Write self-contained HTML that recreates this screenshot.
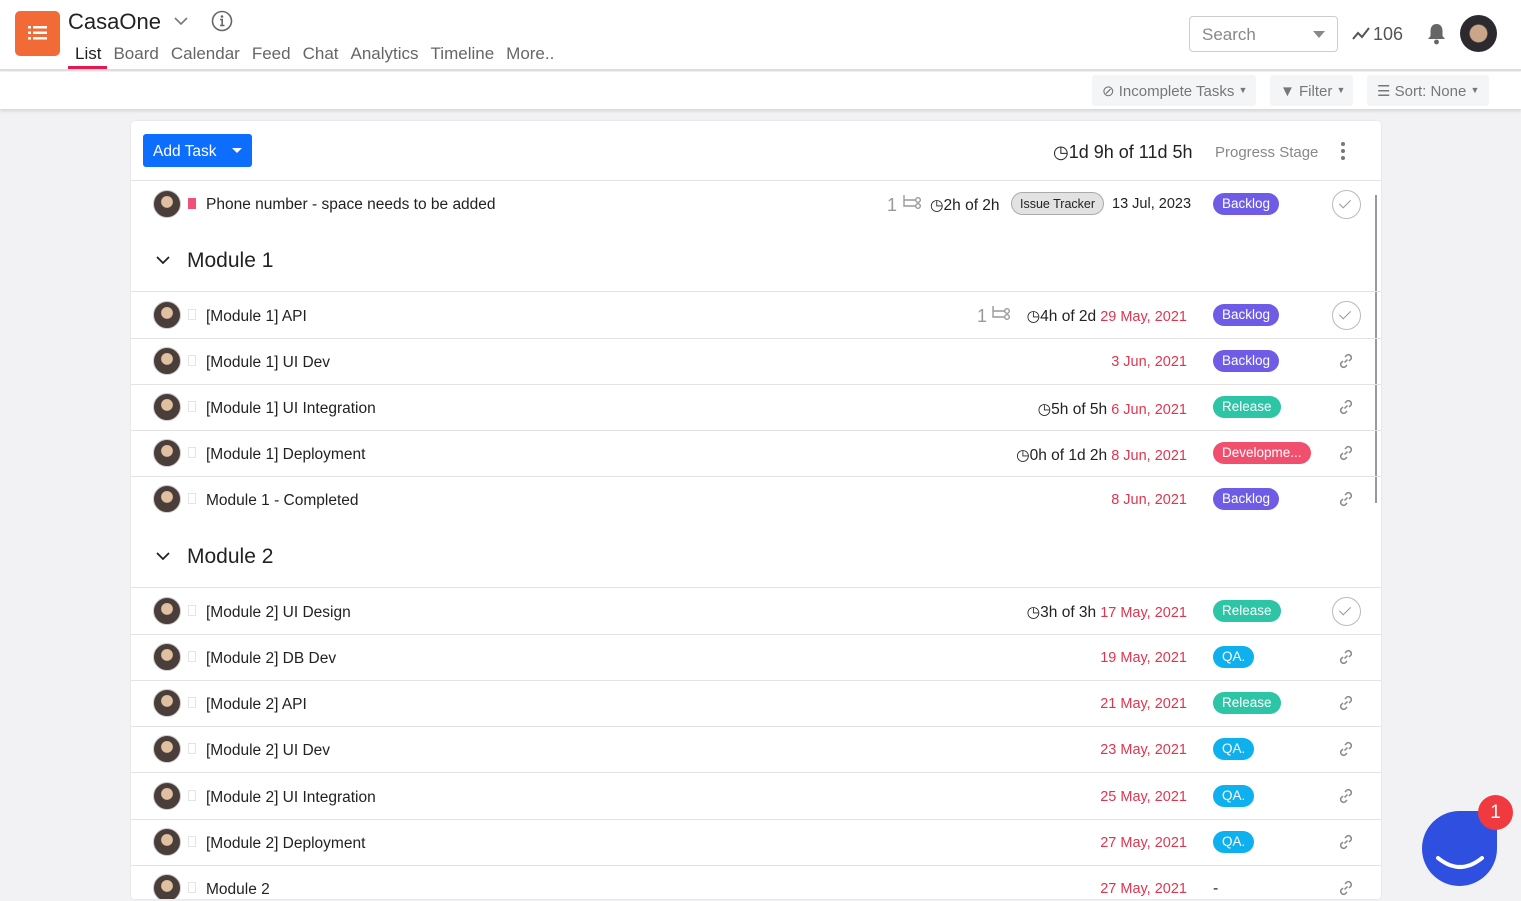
<!DOCTYPE html><html><head><meta charset="utf-8"><style>
*{box-sizing:border-box;margin:0;padding:0}
body{width:1521px;height:901px;overflow:hidden;background:#f2f2f4;font-family:"Liberation Sans",sans-serif;color:#222;position:relative}
.top{position:absolute;left:0;top:0;width:1521px;height:71px;background:#fff;border-bottom:2px solid #ddd}
.bar2{position:absolute;left:0;top:72px;width:1521px;height:37px;background:#fff;box-shadow:0 2px 3px rgba(0,0,0,.12)}
.a{position:absolute}
.nav span{margin-right:12px;color:#666;font-size:17px}
.btn2{position:absolute;top:75px;height:31px;background:#f4f5f7;border-radius:3px;color:#777;font-size:15px;line-height:31px;padding:0 10px;white-space:nowrap}
.btn2 i{font-style:normal;font-size:9px;vertical-align:3px}
.card{position:absolute;left:131px;top:121px;width:1250px;height:778px;background:#fff;border-radius:4px;box-shadow:0 0 2px rgba(0,0,0,.1);overflow:hidden}
.row{position:absolute;left:0;width:1250px;border-top:1px solid #e3e3e3}
.av{position:absolute;left:22px;width:28px;height:28px;border-radius:50%;background:radial-gradient(circle at 50% 42%,#e0c0a0 0 28%,#4a3e3a 31%);border:1px solid #ccc}
.sq{position:absolute;left:57px;width:8px;height:11px;border:1px solid #e4e4e4}
.tt{position:absolute;left:75px;font-size:15.5px;color:#222}
.dt{position:absolute;right:194px;font-size:14.5px;color:#e0354f;text-align:right;white-space:nowrap}
.dt .k{color:#222;font-size:15.5px}
.bd{position:absolute;left:1082px;height:22px;border-radius:11px;color:#fff;font-size:13.5px;line-height:22px;padding:0 9px}
.bl{background:#6e5ce6}.rl{background:#2ec4a6}.dv{background:#f0506e}.qa{background:#0fb0ee}
.ck{position:absolute;left:1201px;width:29px;height:29px;border:1.5px solid #bbb;border-radius:50%}
.ck:after{content:"";position:absolute;left:9px;top:6px;width:5px;height:10px;border:solid #999;border-width:0 1.6px 1.6px 0;transform:rotate(45deg)}
.ln{position:absolute;left:1206px;width:18px;height:18px}
.mh{position:absolute;left:0;width:1250px;font-size:21px}
</style></head><body>
<div class="top"></div>
<div class="a" style="left:15px;top:11px;width:45px;height:45px;background:#f26b36;border-radius:5px"></div>
<svg class="a" style="left:28px;top:25px" width="20" height="16"><g fill="#fff"><rect x="0" y="1" width="3" height="2.5"/><rect x="5" y="1" width="14" height="2.5"/><rect x="0" y="6.5" width="3" height="2.5"/><rect x="5" y="6.5" width="14" height="2.5"/><rect x="0" y="12" width="3" height="2.5"/><rect x="5" y="12" width="14" height="2.5"/></g></svg>
<div class="a" style="left:68px;top:9px;font-size:22px;color:#222">CasaOne</div>
<svg class="a" style="left:174px;top:16px" width="14" height="10"><path d="M1 2l6 6 6-6" fill="none" stroke="#777" stroke-width="1.6"/></svg>
<svg class="a" style="left:211px;top:10px" width="22" height="22"><circle cx="11" cy="11" r="9.5" fill="none" stroke="#666" stroke-width="1.6"/><circle cx="11" cy="6.5" r="1.3" fill="#666"/><path d="M9 9.5h2.2v6M9 15.5h4.5" stroke="#666" stroke-width="1.6" fill="none"/></svg>
<div class="a nav" style="left:75px;top:44px;white-space:nowrap"><span style="color:#222">List</span><span>Board</span><span>Calendar</span><span>Feed</span><span>Chat</span><span>Analytics</span><span>Timeline</span><span>More..</span></div>
<div class="a" style="left:68px;top:66px;width:39px;height:3px;background:#e8174f"></div>
<div class="a" style="left:1189px;top:16px;width:149px;height:36px;border:1px solid #ccc;border-radius:4px;color:#888;font-size:17px;padding:8px 12px">Search</div>
<svg class="a" style="left:1313px;top:31px" width="12" height="7"><path d="M0 0h12L6 7z" fill="#888"/></svg>
<svg class="a" style="left:1352px;top:27px" width="18" height="14"><path d="M1 12l5-6 4 4 7-9" fill="none" stroke="#555" stroke-width="2"/></svg>
<div class="a" style="left:1373px;top:24px;font-size:18px;color:#555">106</div>
<svg class="a" style="left:1426px;top:23px" width="21" height="22"><path d="M10.5 1c-4 0-6 3-6 7v5l-2.5 3h17l-2.5-3V8c0-4-2-7-6-7z" fill="#666"/><circle cx="10.5" cy="19" r="2.4" fill="#666"/></svg>
<div class="a" style="left:1460px;top:15px;width:37px;height:37px;border-radius:50%;background:radial-gradient(circle at 50% 50%,#c9a58a 0 32%,#2c2a2e 36%)"></div>
<div class="bar2"></div>
<div class="btn2" style="left:1092px;width:164px">⊘ Incomplete Tasks <i>▼</i></div>
<div class="btn2" style="left:1270px;width:83px">▼ Filter <i>▼</i></div>
<div class="btn2" style="left:1367px;width:122px">☰ Sort: None <i>▼</i></div>

<div class="card">
<div class="a" style="left:12px;top:13px;width:109px;height:33px;background:#0d6efd;border-radius:3px;color:#fff;font-size:15.5px;line-height:35px;padding-left:10px">Add Task<svg style="position:absolute;left:89px;top:14px" width="10" height="6"><path d="M0 0h10L5 5z" fill="#fff"/></svg></div>
<div class="a" style="left:922px;top:21px;font-size:18px;color:#222">◷1d 9h of 11d 5h</div>
<div class="a" style="left:1084px;top:23px;font-size:15px;color:#888">Progress Stage</div>
<svg class="a" style="left:1209px;top:20px" width="6" height="20"><circle cx="3" cy="3" r="2" fill="#777"/><circle cx="3" cy="10" r="2" fill="#777"/><circle cx="3" cy="17" r="2" fill="#777"/></svg>
<div class="a" style="left:1244px;top:74px;width:2px;height:308px;background:#999"></div>

<div class="row" style="top:59px;height:52px">
<div class="av" style="top:9px"></div><div class="sq" style="top:17px;background:#f0507a;border-color:#f0507a"></div>
<div class="tt" style="top:15px">Phone number - space needs to be added</div>
<div class="a" style="left:756px;top:14px;font-size:18px;color:#999">1</div>
<svg class="a" style="left:771px;top:14px" width="20" height="18"><path d="M2 0v11h12M2 5h12" fill="none" stroke="#999" stroke-width="1.4"/><circle cx="16" cy="5" r="2.3" fill="none" stroke="#999" stroke-width="1.4"/><circle cx="16" cy="11" r="2.3" fill="none" stroke="#999" stroke-width="1.4"/></svg>
<div class="a" style="left:799px;top:15px;font-size:15.5px">◷2h of 2h</div>
<div class="a" style="left:880px;top:11px;height:23px;padding:0 8px;border:1px solid #aaa;background:#e2e2e2;border-radius:12px;font-size:12.5px;line-height:23px">Issue Tracker</div>
<div class="a" style="left:981px;top:15px;font-size:14.5px">13 Jul, 2023</div>
<div class="bd bl" style="top:12px">Backlog</div><div class="ck" style="top:9px"></div>
</div>
<div class="mh" style="top:128px"><svg class="a" style="left:25px;top:7px" width="14" height="9"><path d="M1 1l6 6 6-6" fill="none" stroke="#222" stroke-width="1.8"/></svg><span class="a" style="left:56px;top:0">Module 1</span></div>

<div class="row" style="top:170px;height:47px"><div class="av" style="top:9px"></div><div class="sq" style="top:17px"></div><div class="tt" style="top:16px">[Module 1] API</div>
<div class="a" style="left:846px;top:14px;font-size:18px;color:#999">1</div>
<svg class="a" style="left:860px;top:14px" width="20" height="18"><path d="M2 0v11h12M2 5h12" fill="none" stroke="#999" stroke-width="1.4"/><circle cx="16" cy="5" r="2.3" fill="none" stroke="#999" stroke-width="1.4"/><circle cx="16" cy="11" r="2.3" fill="none" stroke="#999" stroke-width="1.4"/></svg>
<div class="dt" style="top:15px"><span class="k">◷4h of 2d</span> 29 May, 2021</div><div class="bd bl" style="top:12px">Backlog</div><div class="ck" style="top:9px"></div></div>
<div class="row" style="top:217px;height:46px"><div class="av" style="top:8px"></div><div class="sq" style="top:16px"></div><div class="tt" style="top:15px">[Module 1] UI Dev</div><div class="dt" style="top:15px">3 Jun, 2021</div><div class="bd bl" style="top:11px">Backlog</div><svg class="ln" style="top:13px" viewBox="0 0 18 18"><path d="M7.5 10.5l3-3M8 5l2-2a3 3 0 014 4l-2 2M10 13l-2 2a3 3 0 01-4-4l2-2" fill="none" stroke="#888" stroke-width="1.5"/></svg></div>
<div class="row" style="top:263px;height:46px"><div class="av" style="top:8px"></div><div class="sq" style="top:16px"></div><div class="tt" style="top:15px">[Module 1] UI Integration</div><div class="dt" style="top:15px"><span class="k">◷5h of 5h</span> 6 Jun, 2021</div><div class="bd rl" style="top:11px">Release</div><svg class="ln" style="top:13px" viewBox="0 0 18 18"><path d="M7.5 10.5l3-3M8 5l2-2a3 3 0 014 4l-2 2M10 13l-2 2a3 3 0 01-4-4l2-2" fill="none" stroke="#888" stroke-width="1.5"/></svg></div>
<div class="row" style="top:309px;height:46px"><div class="av" style="top:8px"></div><div class="sq" style="top:16px"></div><div class="tt" style="top:15px">[Module 1] Deployment</div><div class="dt" style="top:15px"><span class="k">◷0h of 1d 2h</span> 8 Jun, 2021</div><div class="bd dv" style="top:11px">Developme...</div><svg class="ln" style="top:13px" viewBox="0 0 18 18"><path d="M7.5 10.5l3-3M8 5l2-2a3 3 0 014 4l-2 2M10 13l-2 2a3 3 0 01-4-4l2-2" fill="none" stroke="#888" stroke-width="1.5"/></svg></div>
<div class="row" style="top:355px;height:46px"><div class="av" style="top:8px"></div><div class="sq" style="top:16px"></div><div class="tt" style="top:15px">Module 1 - Completed</div><div class="dt" style="top:15px">8 Jun, 2021</div><div class="bd bl" style="top:11px">Backlog</div><svg class="ln" style="top:13px" viewBox="0 0 18 18"><path d="M7.5 10.5l3-3M8 5l2-2a3 3 0 014 4l-2 2M10 13l-2 2a3 3 0 01-4-4l2-2" fill="none" stroke="#888" stroke-width="1.5"/></svg></div>
<div class="mh" style="top:424px"><svg class="a" style="left:25px;top:7px" width="14" height="9"><path d="M1 1l6 6 6-6" fill="none" stroke="#222" stroke-width="1.8"/></svg><span class="a" style="left:56px;top:0">Module 2</span></div>

<div class="row" style="top:466px;height:47px"><div class="av" style="top:9px"></div><div class="sq" style="top:17px"></div><div class="tt" style="top:16px">[Module 2] UI Design</div><div class="dt" style="top:15px"><span class="k">◷3h of 3h</span> 17 May, 2021</div><div class="bd rl" style="top:12px">Release</div><div class="ck" style="top:9px"></div></div>
<div class="row" style="top:513px;height:46px"><div class="av" style="top:8px"></div><div class="sq" style="top:16px"></div><div class="tt" style="top:15px">[Module 2] DB Dev</div><div class="dt" style="top:15px">19 May, 2021</div><div class="bd qa" style="top:11px">QA.</div><svg class="ln" style="top:13px" viewBox="0 0 18 18"><path d="M7.5 10.5l3-3M8 5l2-2a3 3 0 014 4l-2 2M10 13l-2 2a3 3 0 01-4-4l2-2" fill="none" stroke="#888" stroke-width="1.5"/></svg></div>
<div class="row" style="top:559px;height:46px"><div class="av" style="top:8px"></div><div class="sq" style="top:16px"></div><div class="tt" style="top:15px">[Module 2] API</div><div class="dt" style="top:15px">21 May, 2021</div><div class="bd rl" style="top:11px">Release</div><svg class="ln" style="top:13px" viewBox="0 0 18 18"><path d="M7.5 10.5l3-3M8 5l2-2a3 3 0 014 4l-2 2M10 13l-2 2a3 3 0 01-4-4l2-2" fill="none" stroke="#888" stroke-width="1.5"/></svg></div>
<div class="row" style="top:605px;height:46px"><div class="av" style="top:8px"></div><div class="sq" style="top:16px"></div><div class="tt" style="top:15px">[Module 2] UI Dev</div><div class="dt" style="top:15px">23 May, 2021</div><div class="bd qa" style="top:11px">QA.</div><svg class="ln" style="top:13px" viewBox="0 0 18 18"><path d="M7.5 10.5l3-3M8 5l2-2a3 3 0 014 4l-2 2M10 13l-2 2a3 3 0 01-4-4l2-2" fill="none" stroke="#888" stroke-width="1.5"/></svg></div>
<div class="row" style="top:651px;height:47px"><div class="av" style="top:9px"></div><div class="sq" style="top:17px"></div><div class="tt" style="top:16px">[Module 2] UI Integration</div><div class="dt" style="top:16px">25 May, 2021</div><div class="bd qa" style="top:12px">QA.</div><svg class="ln" style="top:14px" viewBox="0 0 18 18"><path d="M7.5 10.5l3-3M8 5l2-2a3 3 0 014 4l-2 2M10 13l-2 2a3 3 0 01-4-4l2-2" fill="none" stroke="#888" stroke-width="1.5"/></svg></div>
<div class="row" style="top:698px;height:46px"><div class="av" style="top:8px"></div><div class="sq" style="top:16px"></div><div class="tt" style="top:15px">[Module 2] Deployment</div><div class="dt" style="top:15px">27 May, 2021</div><div class="bd qa" style="top:11px">QA.</div><svg class="ln" style="top:13px" viewBox="0 0 18 18"><path d="M7.5 10.5l3-3M8 5l2-2a3 3 0 014 4l-2 2M10 13l-2 2a3 3 0 01-4-4l2-2" fill="none" stroke="#888" stroke-width="1.5"/></svg></div>
<div class="row" style="top:744px;height:46px"><div class="av" style="top:8px"></div><div class="sq" style="top:16px"></div><div class="tt" style="top:15px">Module 2</div><div class="dt" style="top:15px">27 May, 2021</div><div class="a" style="left:1082px;top:14px">-</div><svg class="ln" style="top:13px" viewBox="0 0 18 18"><path d="M7.5 10.5l3-3M8 5l2-2a3 3 0 014 4l-2 2M10 13l-2 2a3 3 0 01-4-4l2-2" fill="none" stroke="#888" stroke-width="1.5"/></svg></div>
</div>

<div class="a" style="left:1422px;top:811px;width:75px;height:75px;background:#2f4fe0;border-radius:50% 12% 50% 50%"></div>
<svg class="a" style="left:1435px;top:855px" width="50" height="20"><path d="M3 3q22 18 44 0" fill="none" stroke="#fff" stroke-width="4" stroke-linecap="round"/></svg>
<div class="a" style="left:1478px;top:795px;width:35px;height:35px;background:#f03a3f;border-radius:50%;color:#fff;font-size:19px;text-align:center;line-height:35px">1</div>
</body></html>
